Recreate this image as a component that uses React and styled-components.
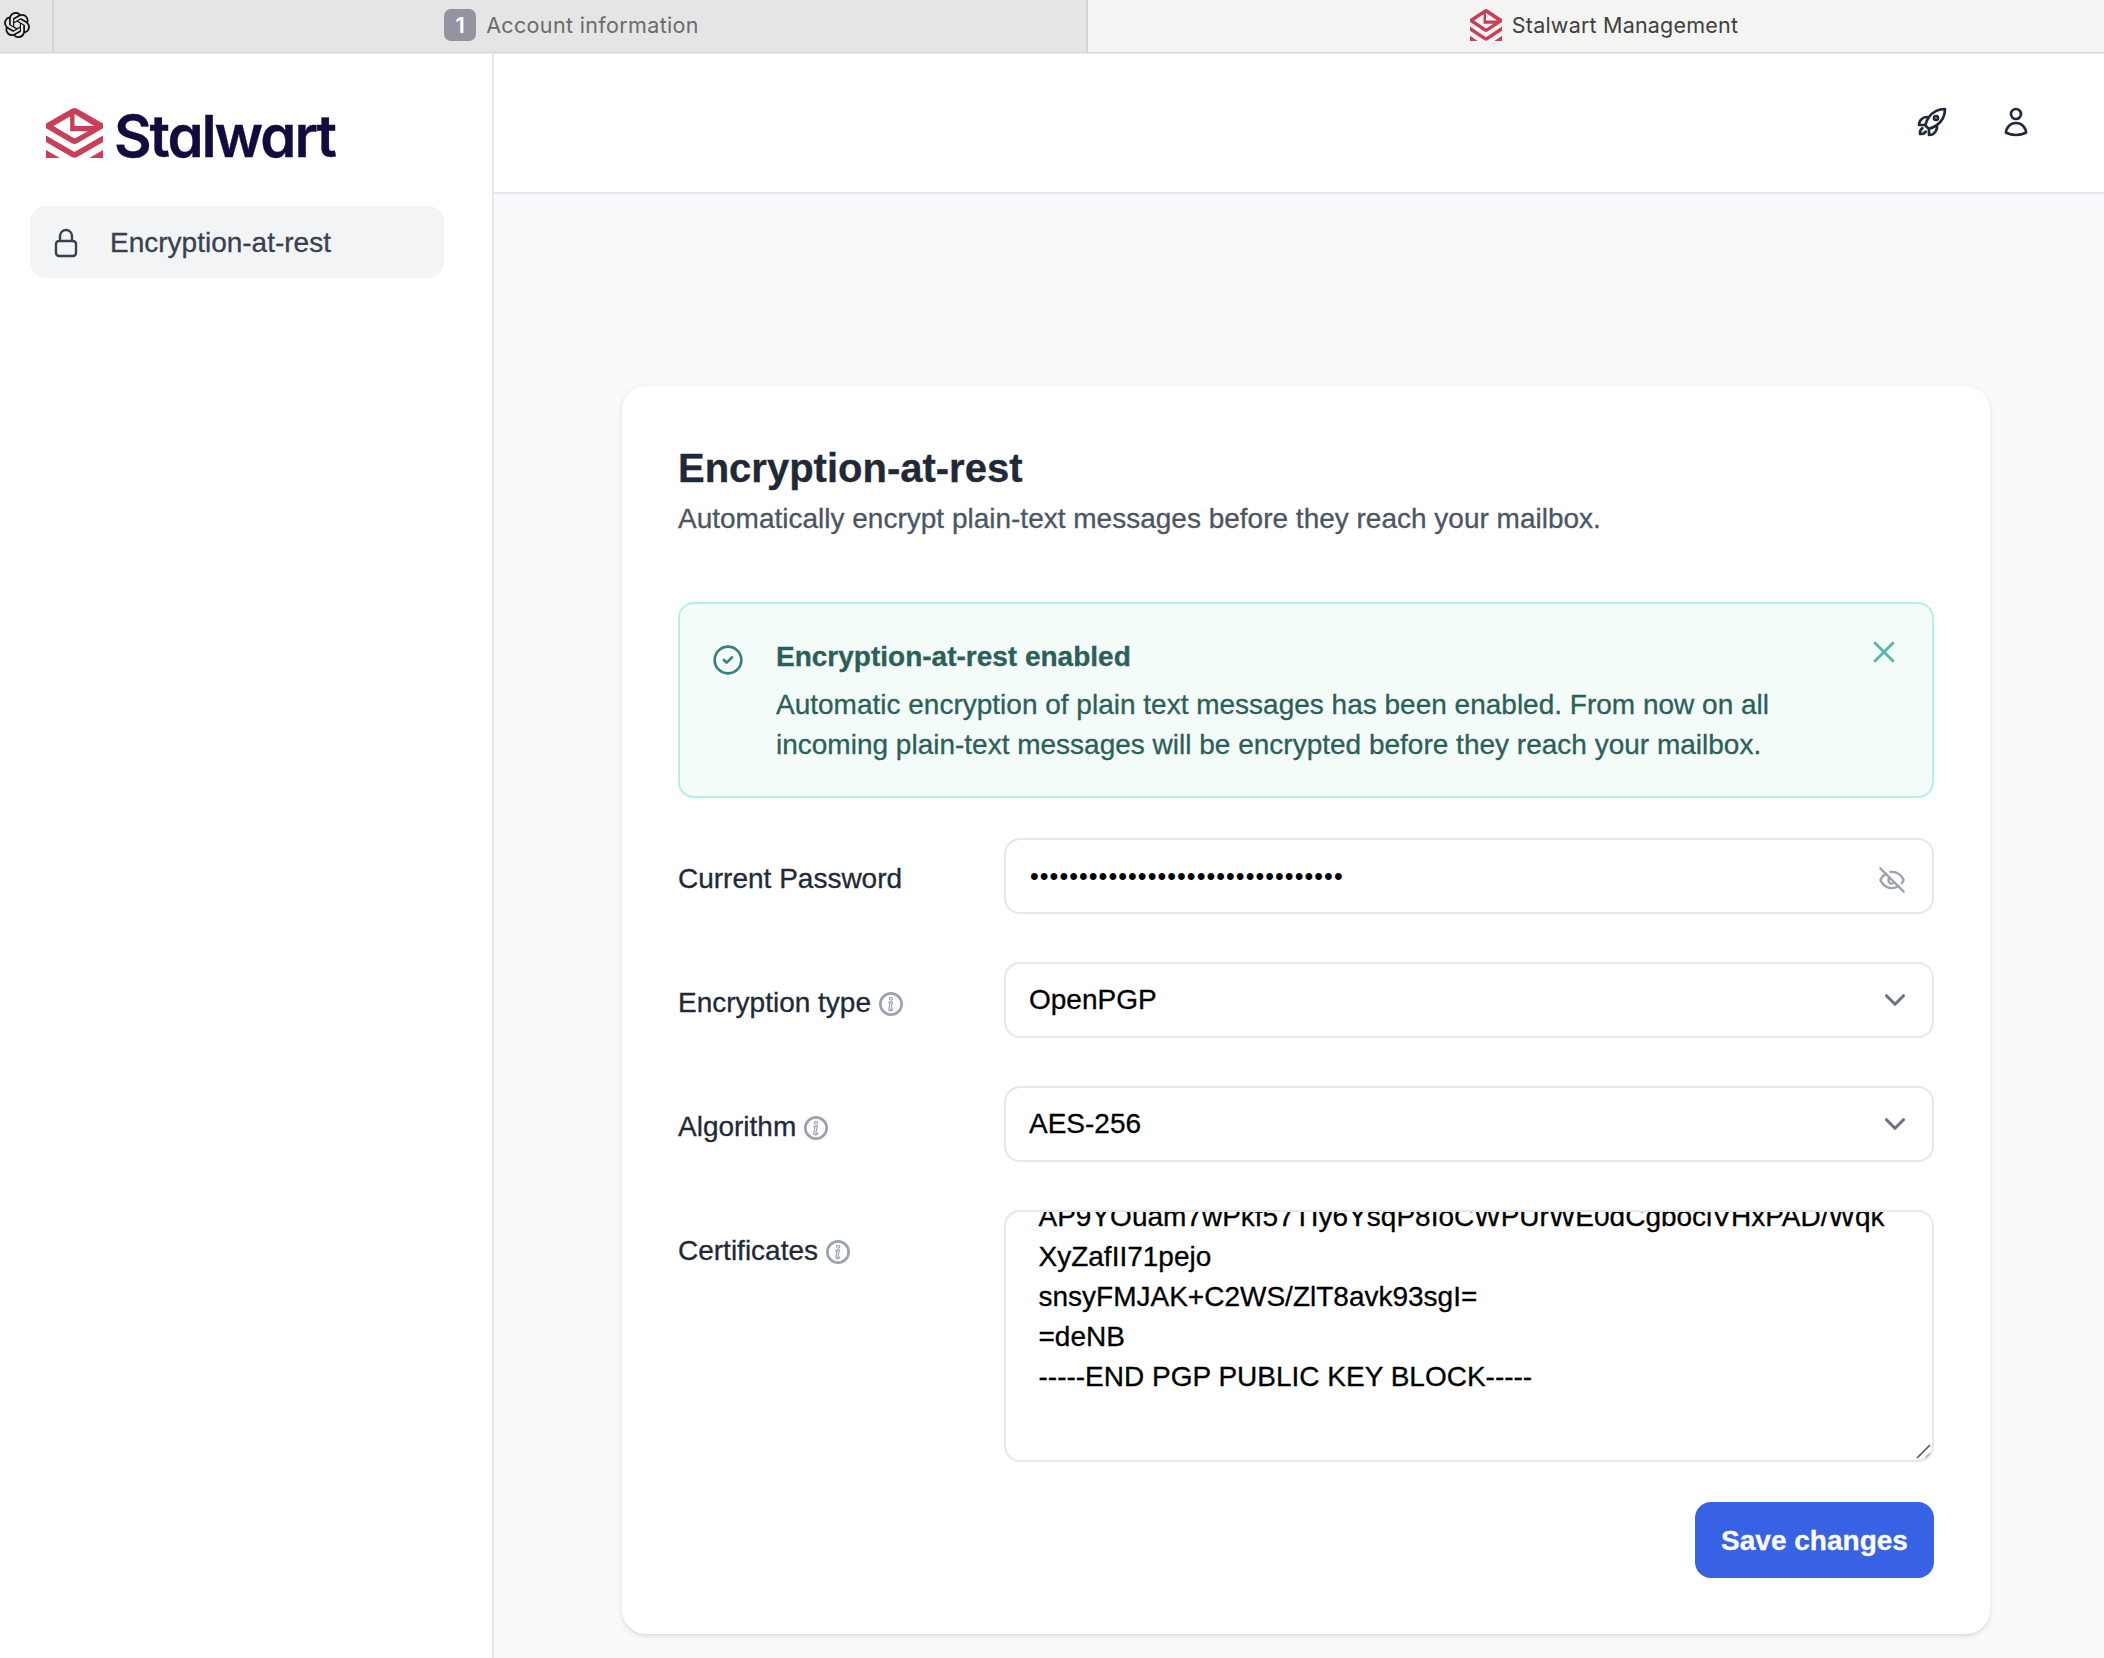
import React from "react";
import styled, { createGlobalStyle } from "styled-components";
import { ChevronDown, CircleCheck, X } from "lucide-react";
import {
  HiOutlineLockClosed,
  HiOutlineRocketLaunch,
  HiOutlineUser,
} from "react-icons/hi2";
import { SiOpenai } from "react-icons/si";

const GlobalStyle = createGlobalStyle`
  * {
    box-sizing: border-box;
  }
  body {
    margin: 0;
    font-family: "Liberation Sans", Helvetica, Arial, sans-serif;
    font-size: 28px;
    line-height: 40px;
    color: #1f2937;
    background: #f9fafc;
    -webkit-text-stroke: 0.3px;
  }
  svg {
    display: block;
    flex-shrink: 0;
  }
`;

const Window = styled.div`
  display: flex;
  flex-direction: column;
  width: 2104px;
  height: 1658px;
  overflow: hidden;
`;

const TabBar = styled.div`
  display: flex;
  height: 53px;
  margin-bottom: 1px;
  border-bottom: 1px solid #d6d6d6;
  background: #e5e5e5;
  box-shadow: 0 1px #ebebeb;
  -webkit-text-stroke: 0;
`;

const PinnedTab = styled.div`
  width: 54px;
  padding: 12px 0 0 4px;
  border-right: 2px solid #d4d4d4;
`;

const Tab = styled.div`
  display: flex;
  align-items: center;
  justify-content: center;
  gap: 10px;
  width: ${(props) => props.$width}px;
  padding: 0 0 2px ${(props) => props.$left || 0}px;
  border-right: ${(props) => (props.$active ? "none" : "2px solid #d4d4d4")};
  background: ${(props) => (props.$active ? "#f4f4f2" : "transparent")};
  color: ${(props) => (props.$active ? "#404040" : "#6b6b6b")};
  font-family: Inter, sans-serif;
  font-size: 21.5px;
  letter-spacing: ${(props) => props.$spacing};
`;

const TabBadge = styled.span`
  width: 32px;
  height: 32px;
  border-radius: 7px;
  background: #9494a1;
  color: #fff;
  font-size: 22px;
  font-weight: 600;
  letter-spacing: 0;
  line-height: 32px;
  text-align: center;
`;

const Page = styled.div`
  display: flex;
  flex: 1;
`;

const Sidebar = styled.aside`
  width: 494px;
  padding: 54px 48px 0 30px;
  border-right: 2px solid #e5e7eb;
  background: #fff;
`;

const Logo = styled.div`
  display: flex;
  height: 98px;
  padding-left: 16px;
  gap: 11px;
`;

const LogoText = styled.span`
  color: #100c3d;
  font-family: Inter, sans-serif;
  font-size: 58px;
  font-weight: 600;
  font-feature-settings: "cv11";
  letter-spacing: -2.1px;
  line-height: 56px;
`;

const NavItem = styled.div`
  display: flex;
  align-items: center;
  gap: 28px;
  height: 72px;
  padding: 1px 0 0 20px;
  border-radius: 16px;
  background: #f3f4f6;
  color: #374151;
`;

const Main = styled.main`
  display: flex;
  flex: 1;
  flex-direction: column;
`;

const Header = styled.header`
  display: flex;
  align-items: center;
  justify-content: flex-end;
  gap: 52px;
  height: 140px;
  padding: 0 72px 2px 0;
  border-bottom: 2px solid #e5e7eb;
  background: #fff;
`;

const Card = styled.section`
  display: flex;
  flex-direction: column;
  width: 1368px;
  height: 1248px;
  margin: 192px 0 0 128px;
  padding: 56px;
  border-radius: 24px;
  background: #fff;
  box-shadow: 0 2px 6px rgba(0, 0, 0, 0.1), 0 2px 4px -2px rgba(0, 0, 0, 0.1);
`;

const Title = styled.h2`
  margin: 0 0 5px;
  font-size: 40px;
  font-weight: 700;
  line-height: 52px;
`;

const SubTitle = styled.p`
  margin: 0 0 63px;
  color: #4b5563;
`;

const Alert = styled.div`
  display: flex;
  height: 196px;
  margin-bottom: 40px;
  padding: 33px 32px 31px;
  border: 2px solid #aff3e2;
  border-radius: 16px;
  background: #f3fcf9;
  color: #2c5f59;
`;

const AlertIcon = styled.div`
  margin-top: 7px;
  color: #38807f;
`;

const AlertBody = styled.div`
  flex: 1;
  margin: 0 0 0 32px;
`;

const AlertTitle = styled.h3`
  margin: 0 0 8px;
  font-size: 28px;
  font-weight: 700;
`;

const AlertText = styled.p`
  width: 1010px;
  margin: 0;
`;

const CloseButton = styled.div`
  width: 36px;
  height: 36px;
  margin: -3px -2px 0 0;
  color: #55b5a7;
`;

const Form = styled.div`
  display: grid;
  grid-template-columns: 326px 1fr;
  row-gap: 48px;
`;

const Label = styled.div`
  display: flex;
  align-items: flex-start;
  gap: 8px;
  padding-top: 21px;

  svg {
    margin-top: 9px;
  }
`;

const Control = styled.div`
  display: flex;
  align-items: center;
  justify-content: space-between;
  height: 76px;
  padding: 0 ${(props) => props.$right || 20}px 0 23px;
  border: 2px solid #e5e7eb;
  border-radius: 16px;
  background: #fff;
  color: #000;
`;

const Value = styled.span``;

const Dots = styled.span`
  padding-left: 1px;
  font-size: 25px;
  letter-spacing: 1.05px;
  -webkit-text-stroke: 0;
`;

const TextArea = styled.div`
  position: relative;
  display: flex;
  flex-direction: column;
  justify-content: flex-end;
  height: 252px;
  padding: 0 31px 63px 32.5px;
  overflow: hidden;
  border: 2px solid #e5e7eb;
  border-radius: 16px;
  color: #000;
  white-space: pre;
`;

const Grip = styled.svg`
  position: absolute;
  right: 0;
  bottom: 0;
`;

const SaveButton = styled.button`
  align-self: flex-end;
  width: 239px;
  height: 76px;
  margin-top: 40px;
  padding: 1px 0 0;
  border: 0;
  border-radius: 16px;
  background: #3762e3;
  color: #fff;
  font: inherit;
  font-weight: 700;
`;

const EyeOff = styled.svg`
  margin-top: 8px;
`;

const StalwartMark = ({ width, height }) => (
  <svg
    width={width}
    height={height}
    viewBox="0 0 170 149"
    preserveAspectRatio="none"
    fill="#c83f57"
  >
    <path
      fillRule="evenodd"
      d="M0 46L77 2Q85 -2 93 2L170 46V60L93 105Q85 109 77 105L0 60ZM22 54L85 91L125 69H72V25ZM85 18V54H144Z"
    />
    <path d="M0 82L85 131L170 82V101L93 146Q85 150 77 146L0 101Z" />
    <path d="M0 125L41 149H0ZM170 125L129 149H170Z" />
  </svg>
);

const InfoIcon = () => (
  <svg
    width="24"
    height="24"
    viewBox="0 0 16 16"
    fill="none"
    stroke="#9ca3af"
    strokeWidth="0.8"
  >
    <circle cx="8" cy="8" r="7.1" strokeWidth="1.8" />
    <path d="m8.93 6.588-2.29.287-.082.38.45.083c.294.07.352.176.288.469l-.738 3.468c-.194.897.105 1.319.808 1.319.545 0 1.178-.252 1.465-.598l.088-.416c-.2.176-.492.246-.686.246-.275 0-.375-.193-.304-.533L8.93 6.588zM9 4.5a1 1 0 1 1-2 0 1 1 0 0 1 2 0z" />
  </svg>
);

const EyeOffIcon = () => (
  <EyeOff
    width="28"
    height="28"
    viewBox="0 0 24 24"
    fill="none"
    stroke="#9ca3af"
    strokeWidth="2"
    strokeLinecap="round"
    strokeLinejoin="round"
  >
    <path d="M9.88 9.88a3 3 0 1 0 4.24 4.24" />
    <path d="M10.73 5.08A10.43 10.43 0 0 1 12 5c7 0 10 7 10 7a13.16 13.16 0 0 1-1.67 2.68" />
    <path d="M6.61 6.61A13.526 13.526 0 0 0 2 12s3 7 10 7a9.74 9.74 0 0 0 5.39-1.61" />
    <path d="M2 2l20 20" />
  </EyeOff>
);

const certificate = `AP9YOuam7wPkf57TIy6YsqP8IoCWPUrWE0dCgbociVHxPAD/Wqk
XyZafII71pejo
snsyFMJAK+C2WS/ZlT8avk93sgI=
=deNB
-----END PGP PUBLIC KEY BLOCK-----`;

const App = () => {
  return (
    <Window>
      <GlobalStyle />
      <TabBar>
        <PinnedTab>
          <SiOpenai size={26} color="#111" />
        </PinnedTab>
        <Tab $width={1034} $left={3} $spacing="0.35px">
          <TabBadge>1</TabBadge>
          Account information
        </Tab>
        <Tab $width={1016} $left={16} $spacing="0.2px" $active>
          <StalwartMark width={32} height={32} />
          Stalwart Management
        </Tab>
      </TabBar>

      <Page>
        <Sidebar>
          <Logo>
            <StalwartMark width={57} height={50} />
            <LogoText>Stalwart</LogoText>
          </Logo>
          <NavItem>
            <HiOutlineLockClosed size={32} strokeWidth={1.8} />
            Encryption-at-rest
          </NavItem>
        </Sidebar>

        <Main>
          <Header>
            <HiOutlineRocketLaunch size={32} strokeWidth={2} />
            <HiOutlineUser size={32} strokeWidth={2} />
          </Header>

          <Card>
            <Title>Encryption-at-rest</Title>
            <SubTitle>
              Automatically encrypt plain-text messages before they reach your mailbox.
            </SubTitle>

            <Alert>
              <AlertIcon>
                <CircleCheck size={32} />
              </AlertIcon>
              <AlertBody>
                <AlertTitle>Encryption-at-rest enabled</AlertTitle>
                <AlertText>
                  Automatic encryption of plain text messages has been enabled. From now on all
                  incoming plain-text messages will be encrypted before they reach your mailbox.
                </AlertText>
              </AlertBody>
              <CloseButton>
                <X size={36} strokeWidth={1.8} />
              </CloseButton>
            </Alert>

            <Form>
              <Label>Current Password</Label>
              <Control $right={26}>
                <Dots>{"•".repeat(32)}</Dots>
                <EyeOffIcon />
              </Control>

              <Label>
                Encryption type <InfoIcon />
              </Label>
              <Control>
                <Value>OpenPGP</Value>
                <ChevronDown size={34} strokeWidth={2.2} color="#6b7280" />
              </Control>

              <Label>
                Algorithm <InfoIcon />
              </Label>
              <Control>
                <Value>AES-256</Value>
                <ChevronDown size={34} strokeWidth={2.2} color="#6b7280" />
              </Control>

              <Label>
                Certificates <InfoIcon />
              </Label>
              <TextArea>
                {certificate}
                <Grip width="16" height="16" viewBox="0 0 16 16" stroke="#555" strokeWidth="1.6">
                  <path d="M1 14L14 1M9 15L15 9" />
                </Grip>
              </TextArea>
            </Form>

            <SaveButton>Save changes</SaveButton>
          </Card>
        </Main>
      </Page>
    </Window>
  );
};

export default App;
